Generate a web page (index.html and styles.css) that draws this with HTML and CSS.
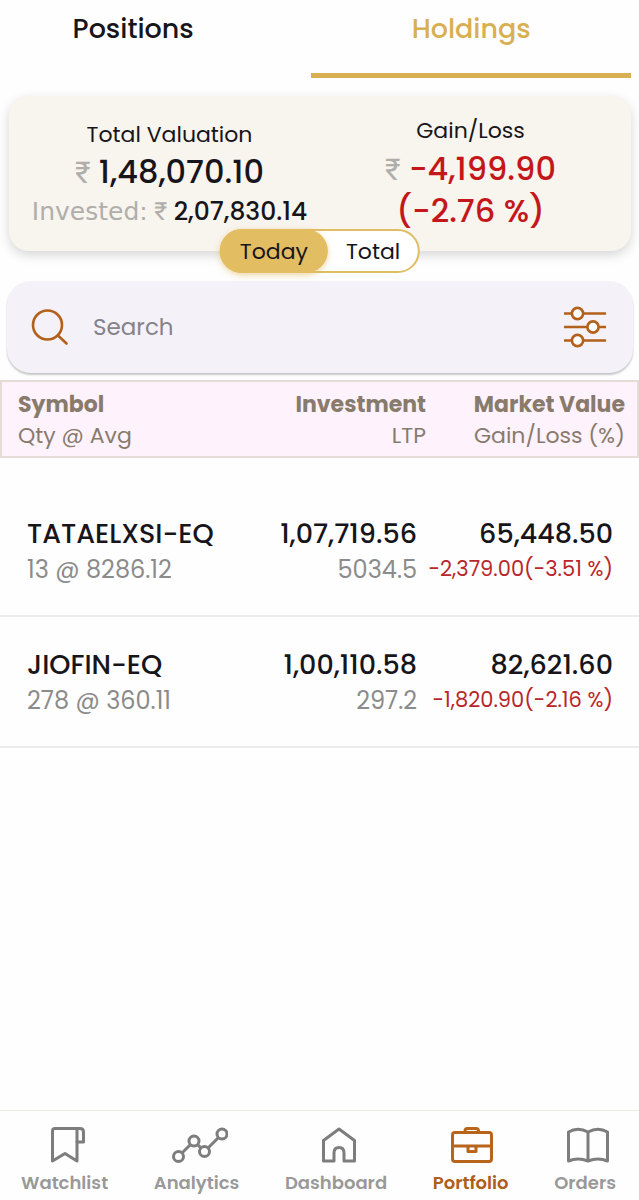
FILE: index.html
```html
<!DOCTYPE html>
<html lang="en">
<head>
	<meta charset="utf-8" />
	<meta name="viewport" content="width=device-width, initial-scale=1" />
	<title>Portfolio - Holdings</title>
	<link rel="stylesheet" href="styles.css">
</head>
<body>
	<nav class="tabs">
		<a href="#positions">Positions</a>
		<a href="#holdings" class="active">Holdings</a>
	</nav>

	<main>
		<section class="summary">
			<div class="summary-col">
				<div class="label">Total Valuation</div>
				<div class="amount"><span class="rupee">₹</span> 1,48,070.10</div>
				<div class="invested"><span class="invested-label">Invested:</span> <span class="rupee">₹</span> 2,07,830.14</div>
			</div>
			<div class="summary-col gain">
				<div class="label">Gain/Loss</div>
				<div class="amount loss"><span class="rupee">₹</span> -4,199.90</div>
				<div class="amount loss">(-2.76 %)</div>
			</div>
			<div class="toggle">
				<button type="button" class="on">Today</button>
				<button type="button">Total</button>
			</div>
		</section>

		<form class="search">
			<svg width="38" height="38" viewBox="0 0 38 38" fill="none" stroke="#b2601a" stroke-width="2.6" stroke-linecap="round">
				<circle cx="16.5" cy="17" r="14.5"/>
				<path d="M27 27.5L35.5 35.5"/>
			</svg>
			<input type="text" placeholder="Search" aria-label="Search">
			<button type="button" aria-label="Filter">
				<svg width="44" height="42" viewBox="0 0 44 42" fill="#fff" stroke="#b2601a" stroke-width="2.6">
					<path d="M1 7.5H43M1 21H43M1 34.5H43"/>
					<circle cx="14.5" cy="7.5" r="5.6"/>
					<circle cx="30" cy="21" r="5.6"/>
					<circle cx="14.5" cy="34.5" r="5.6"/>
				</svg>
			</button>
		</form>

		<table class="holdings">
			<thead>
				<tr>
					<th scope="col">Symbol<span>Qty @ Avg</span></th>
					<th scope="col">Investment<span>LTP</span></th>
					<th scope="col">Market Value<span>Gain/Loss (%)</span></th>
				</tr>
			</thead>
			<tbody>
				<tr class="spacer"><td colspan="3"></td></tr>
				<tr>
					<td>TATAELXSI-EQ<span>13 @ 8286.12</span></td>
					<td>1,07,719.56<span>5034.5</span></td>
					<td>65,448.50<span class="change">-2,379.00(-3.51 %)</span></td>
				</tr>
				<tr>
					<td>JIOFIN-EQ<span>278 @ 360.11</span></td>
					<td>1,00,110.58<span>297.2</span></td>
					<td>82,621.60<span class="change">-1,820.90(-2.16 %)</span></td>
				</tr>
			</tbody>
		</table>
	</main>

	<nav class="bottom">
		<a href="#watchlist">
			<svg width="34" height="36" viewBox="0 0 34 36">
				<path d="M1.5 34V4Q1.5 1.5 4 1.5H29Q32.5 1.5 32.5 5V15H26V34L14 26.5Z"/>
				<path d="M26 15V1.5"/>
			</svg>
			Watchlist
		</a>
		<a href="#analytics">
			<svg width="56" height="36" viewBox="0 0 56 36">
				<path d="M10 26L18 18M26 18L29 21M36 21L46 11"/>
				<circle cx="6.5" cy="29.5" r="5"/>
				<circle cx="22" cy="14" r="5"/>
				<circle cx="32.5" cy="24.5" r="5"/>
				<circle cx="50" cy="7" r="5"/>
			</svg>
			Analytics
		</a>
		<a href="#dashboard">
			<svg width="34" height="36" viewBox="0 0 34 36">
				<path d="M1.5 34V13.5L17 2L32.5 13.5V34H22V26Q22 20.5 17 20.5T12 26V34Z"/>
			</svg>
			Dashboard
		</a>
		<a href="#portfolio" class="active">
			<svg width="42" height="36" viewBox="0 0 42 36">
				<rect x="1.5" y="5.5" width="39" height="29" rx="2.5"/>
				<path d="M14 5.5V4Q14 1.5 16.5 1.5H25Q27.5 1.5 27.5 4V5.5M1.5 19H40.5M17 19V24.5H25V19"/>
			</svg>
			Portfolio
		</a>
		<a href="#orders">
			<svg width="42" height="36" viewBox="0 0 42 36">
				<path d="M21 5Q11 -.5 1.5 5V34Q11 30 21 34Q31 30 40.5 34V5Q31 -.5 21 5V34"/>
			</svg>
			Orders
		</a>
	</nav>
</body>
</html>
```
FILE: styles.css
```css
* { margin:0; padding:0; box-sizing:border-box; }
body { display:flex; flex-direction:column; min-height:100vh; background:#fefefe; color:#17151a; font-family:Poppins, Inter, "Noto Sans", sans-serif; }
main { flex:1; }
a { text-decoration:none; color:inherit; }
button { border:0; background:none; font:inherit; color:inherit; cursor:pointer; }
svg { display:block; }

.tabs { display:grid; grid-template-columns:5fr 6fr; column-gap:45px; padding-right:8px; font-size:27px; font-weight:500; text-align:center; }
.tabs a { height:78px; padding-top:9px; line-height:40px; border-bottom:5px solid transparent; }
.tabs .active { color:#d8b052; border-color:#d8b052; }

.summary { position:relative; display:grid; grid-template-columns:1fr 1fr; margin:18px 8px 0 9px; padding:22px 10px 0; height:155px; border-radius:20px; background:#f8f4ee; box-shadow:0 4px 12px rgba(0,0,0,.16); text-align:center; white-space:nowrap; }
.label { line-height:34px; font-size:22px; }
.amount { line-height:40px; font-size:32px; font-weight:500; }
.invested { line-height:40px; font-size:25px; font-weight:500; }
.invested-label { font-family:"DejaVu Sans", sans-serif; font-weight:400; color:#b0aeab; }
.rupee { font-family:Roboto, sans-serif; font-weight:400; color:#b0aeab; font-size:30px; line-height:1; }
.invested .rupee { font-size:25px; }
.gain { margin-top:-4px; }
.gain .amount { line-height:42px; }
.loss { color:#c4171a; }

/* switch sits over the lower edge of the card */
.toggle { position:absolute; left:50%; bottom:-22px; transform:translateX(-50%); display:flex; height:44px; border:2px solid #dfbd63; border-radius:22px; background:#fff; font-size:22px; }
.toggle button { padding:0 18px; border-radius:22px; }
.toggle .on { margin:-2px 0 -2px -2px; padding:0 20px; background:#e2bd62; box-shadow:0 2px 6px rgba(226,189,98,.6); }

.search { display:flex; align-items:center; margin:30px 6px 7px 7px; padding:0 26px 0 24px; height:92px; border-radius:24px; background:#f5f1f9; box-shadow:0 2px 2px rgba(0,0,0,.22); }
.search input { flex:1; min-width:0; margin-left:24px; border:0; outline:0; background:none; font:400 23px Poppins, Inter, sans-serif; color:#17151a; }
.search input::placeholder { color:#858389; opacity:1; }

.holdings { width:100%; table-layout:fixed; border-collapse:separate; border-spacing:0; text-align:right; white-space:nowrap; }
.holdings th:first-child, .holdings td:first-child { text-align:left; }
.holdings th:last-child { width:213px; }
.holdings span { display:block; font-weight:400; }
.holdings th { padding:7px 0 5px; border:solid #e6dcd7; border-width:2px 0; background:#fef2fd; color:#887b6c; font-size:22px; font-weight:700; line-height:31px; }
.holdings th:first-child { padding-left:16px; border-left-width:2px; }
.holdings th:last-child { padding-right:12px; border-right-width:2px; }
.holdings td { height:131px; padding:30px 9px 0 0; border-bottom:2px solid #ececec; font-size:27px; font-weight:500; line-height:36px; vertical-align:top; }
.holdings td:first-child { padding-left:27px; }
.holdings td:last-child { padding-right:26px; }
.holdings td span { font-size:24px; color:#8b8b8b; }
.holdings td .change { font-size:21px; line-height:33px; color:#b8272b; }
.holdings .spacer td { height:28px; padding:0; border:0; }

.bottom { display:flex; justify-content:space-between; height:90px; padding:16px 23px 0 21px; border-top:1px solid #eeeae0; color:#999; font-size:18px; font-weight:600; line-height:26px; }
.bottom a { display:flex; flex-direction:column; align-items:center; gap:7px; }
.bottom svg { margin-left:6px; fill:none; stroke:#7d7d7d; stroke-width:3; stroke-linejoin:round; }
.bottom .active { color:#ad6018; }
.bottom .active svg { margin-left:2px; stroke:#b8651b; }
```
